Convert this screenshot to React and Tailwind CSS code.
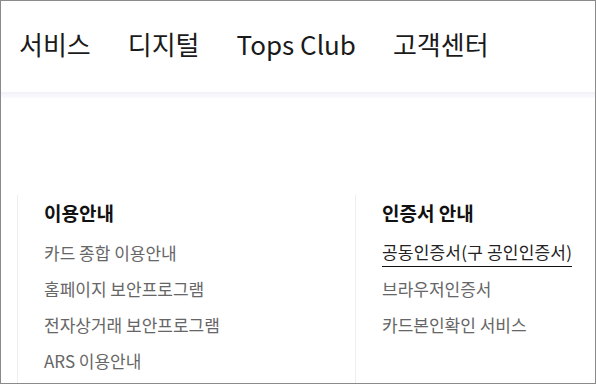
import React from "react";

export default function App() {
  const nav = ["서비스", "디지털", "Tops Club", "고객센터"];
  const col1 = ["카드 종합 이용안내", "홈페이지 보안프로그램", "전자상거래 보안프로그램", "ARS 이용안내"];
  const col2 = ["브라우저인증서", "카드본인확인 서비스"];
  return (
    <div className="w-[596px] h-[384px] overflow-hidden bg-white border border-[#8a8a8a] flex flex-col font-['Noto_Sans_CJK_KR',sans-serif]">
      <div className="h-[91px] shrink-0 flex items-center pl-[18px] gap-[37px] text-[26px] text-[#1a1a1a] pb-[6px]">
        {nav.map((n) => (
          <span key={n} className="leading-none">{n}</span>
        ))}
      </div>
      <div className="h-[6px] shrink-0 bg-gradient-to-b from-[#f1f1f8] to-[#fbfbfe]" />
      <div className="flex-1 flex pl-[16px] pt-[97px]">
        <div className="w-[338px] border-l border-[#eeeeee] pl-[26px] pt-[5px]">
          <div className="text-[19px] font-bold text-[#111] leading-[26px]">이용안내</div>
          <ul className="mt-[9px] flex flex-col">
            {col1.map((t) => (
              <li key={t} className="text-[17px] text-[#666] leading-[36px] h-[36px]">{t}</li>
            ))}
          </ul>
        </div>
        <div className="flex-1 border-l border-[#eeeeee] pl-[26px] pt-[5px]">
          <div className="text-[19px] font-bold text-[#111] leading-[26px]">인증서 안내</div>
          <ul className="mt-[9px] flex flex-col">
            <li className="h-[36px]">
              <span className="inline-block text-[17px] text-[#222] leading-[28px] border-b-[1.5px] border-[#111] mt-[3px] tracking-[0.2px]">
                공동인증서(구 공인인증서)
              </span>
            </li>
            {col2.map((t) => (
              <li key={t} className="text-[17px] text-[#666] leading-[36px] h-[36px]">{t}</li>
            ))}
          </ul>
        </div>
      </div>
    </div>
  );
}
